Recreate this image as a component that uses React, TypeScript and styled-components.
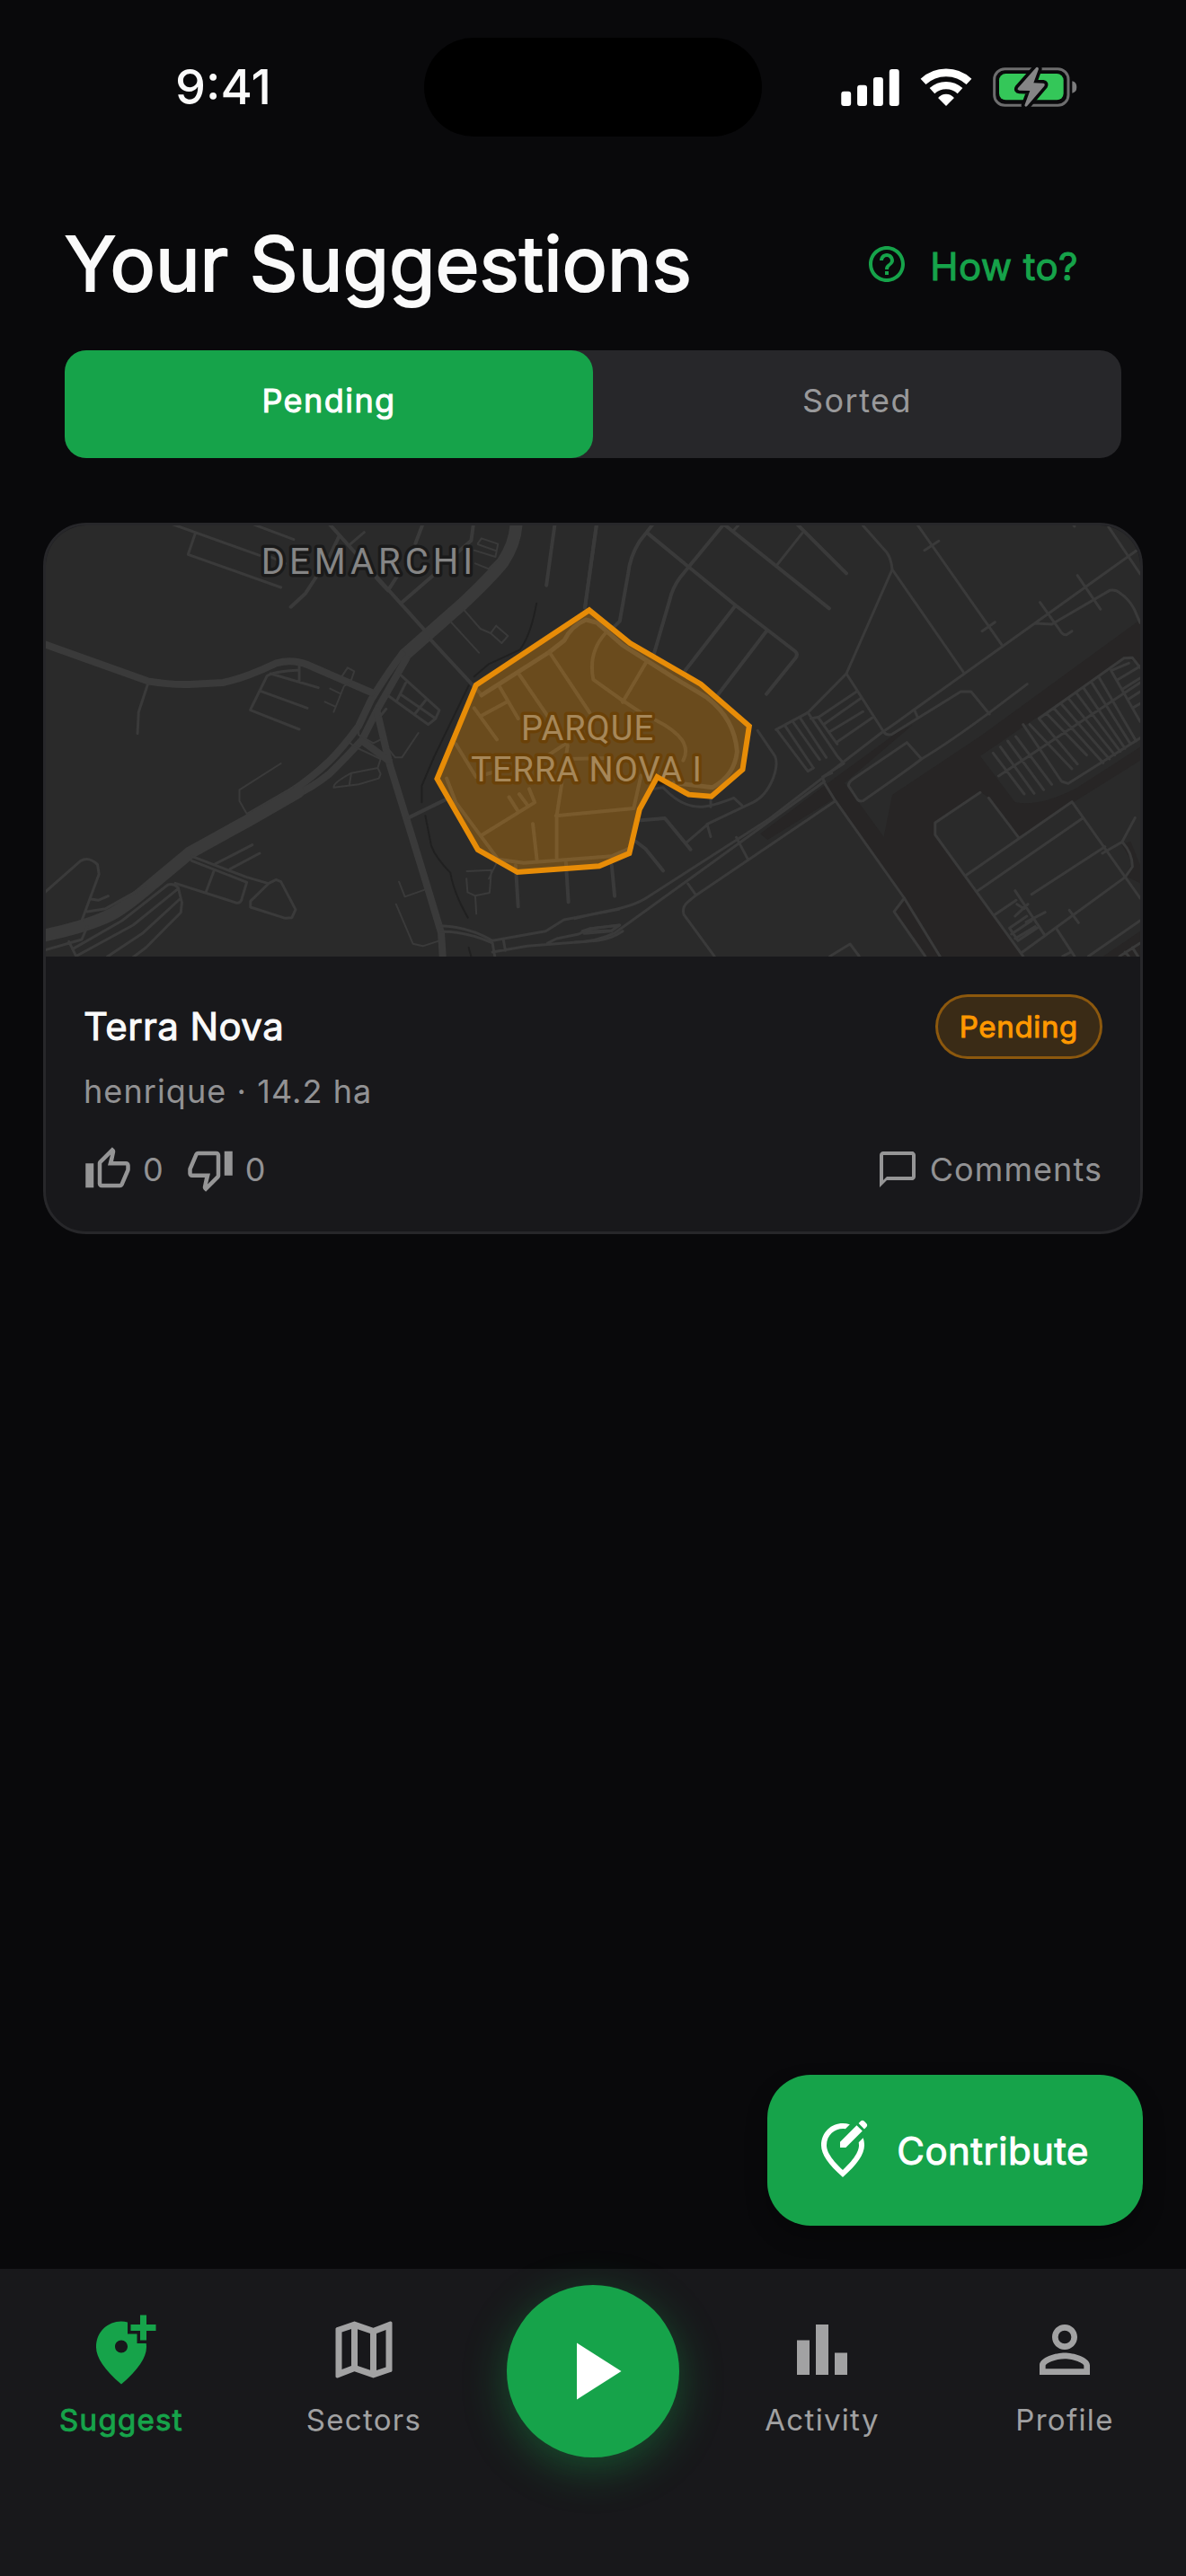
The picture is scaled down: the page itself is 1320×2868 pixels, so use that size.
import React from "react";
import styled, { createGlobalStyle, css } from "styled-components";
import {
  MdAddLocationAlt,
  MdBarChart,
  MdChatBubbleOutline,
  MdHelpOutline,
  MdOutlineEditLocationAlt,
  MdOutlineMap,
  MdOutlineThumbDown,
  MdOutlineThumbUp,
  MdPersonOutline,
  MdPlayArrow,
} from "react-icons/md";

const color = {
  page: "#09090b",
  surface: "#18181b",
  raised: "#27272a",
  green: "#16a34a",
  orange: "#ff9800",
  text: "#fafafa",
  muted: "rgba(255, 255, 255, 0.54)",
  nav: "rgba(255, 255, 255, 0.6)",
};

/* Emphasis: the regular cut thickened by a thin outline */
const emphasis = css`
  font-weight: 400;
  -webkit-text-stroke: 1px currentColor;
`;

const GlobalStyle = createGlobalStyle`
  *, *::before, *::after { box-sizing: border-box; }
  body {
    margin: 0;
    background: ${color.page};
    color: ${color.text};
    font-family: Inter, Roboto, "Liberation Sans", sans-serif;
  }
  button {
    margin: 0;
    padding: 0;
    border: 0;
    background: none;
    color: inherit;
    font: inherit;
    cursor: pointer;
  }
  svg { display: block; flex: none; }
`;

const Screen = styled.div`
  display: flex;
  flex-direction: column;
  min-height: 100vh;
`;

/* Status bar */

const StatusBar = styled.div`
  display: grid;
  grid-template-columns: 1fr auto 1fr;
  align-items: center;
  padding: 42px 0 34px;
`;

const Clock = styled.time`
  padding-left: 195px;
  font-size: 54px;
  font-weight: 500;
  line-height: 60px;
`;

const Island = styled.div`
  width: 376px;
  height: 110px;
  border-radius: 55px;
  background: #000;
`;

const StatusIcons = styled.div`
  display: flex;
  justify-content: flex-end;
  align-items: center;
  gap: 23px;
  padding-right: 121px;
`;

/* Header */

const Header = styled.header`
  display: flex;
  flex-direction: column;
  gap: 48px;
  padding: 60px 72px 0;
`;

const TitleRow = styled.div`
  display: flex;
  align-items: center;
  justify-content: space-between;
`;

const Title = styled.h1`
  margin: 0;
  font-size: 84px;
  font-weight: 400;
  line-height: 96px;
  -webkit-text-stroke: 2px currentColor;
`;

const HelpButton = styled.button`
  ${emphasis}
  display: flex;
  align-items: center;
  gap: 24px;
  padding: 0 48px;
  color: ${color.green};
  font-size: 42px;
  line-height: 60px;
  letter-spacing: 0.01em;
`;

const HelpLabel = styled.span`
  padding-top: 6px;
`;

const Tabs = styled.div`
  display: grid;
  grid-template-columns: 1fr 1fr;
  border-radius: 24px;
  background: ${color.raised};
`;

const Tab = styled.button<{ $active?: boolean }>`
  height: 120px;
  padding-bottom: 8px;
  border-radius: 24px;
  background: ${(p) => (p.$active ? color.green : "transparent")};
  color: ${(p) => (p.$active ? "#fff" : color.muted)};
  font-size: 36px;
  letter-spacing: 0.04em;
  ${(p) => p.$active && emphasis}
`;

/* Suggestion card */

const Main = styled.main`
  display: flex;
  flex: 1;
  flex-direction: column;
  padding: 72px 48px 48px;
`;

const Card = styled.article`
  overflow: hidden;
  border: 3px solid ${color.raised};
  border-radius: 48px;
  background: ${color.surface};
`;

const MapFrame = styled.div`
  height: 480px;
  background: #2a2a2a;

  > svg {
    width: 100%;
    height: 100%;
  }
`;

const CardBody = styled.div`
  display: flex;
  flex-direction: column;
  padding: 42px;
`;

const Row = styled.div`
  display: flex;
  align-items: center;
  justify-content: space-between;
`;

const CardTitle = styled.h2`
  ${emphasis}
  margin: 0;
  font-size: 42px;
  line-height: 60px;
  letter-spacing: 0.01em;
`;

const Pill = styled.span`
  ${emphasis}
  padding: 0 24px;
  border: 3px solid rgba(255, 152, 0, 0.5);
  border-radius: 36px;
  background: rgba(255, 152, 0, 0.15);
  background-clip: padding-box;
  color: ${color.orange};
  font-size: 33px;
  line-height: 66px;
  letter-spacing: 0.02em;
`;

const Meta = styled.p`
  margin: 12px 0 36px;
  color: ${color.muted};
  font-size: 36px;
  line-height: 48px;
  letter-spacing: 0.03em;
`;

const Votes = styled.div`
  display: flex;
  gap: 24px;
`;

const CardAction = styled.button`
  display: flex;
  align-items: center;
  gap: 12px;
  height: 54px;
  color: ${color.muted};
  font-size: 36px;
  line-height: 48px;
  letter-spacing: 0.03em;
`;

const FabRow = styled.div`
  display: flex;
  justify-content: flex-end;
  margin-top: auto;
`;

const Fab = styled.button`
  ${emphasis}
  display: flex;
  align-items: center;
  gap: 24px;
  height: 168px;
  padding: 0 60px 0 48px;
  border-radius: 48px;
  background: ${color.green};
  box-shadow: 0 12px 24px rgba(0, 0, 0, 0.3);
  color: #fff;
  font-size: 42px;
  letter-spacing: 0.01em;
`;

/* Bottom navigation */

const Nav = styled.nav`
  display: grid;
  grid-template-columns: 1fr 1fr 240px 1fr 1fr;
  justify-items: center;
  align-items: start;
  padding: 18px 0 132px;
  background: ${color.surface};
`;

const NavItem = styled.a<{ $active?: boolean }>`
  display: flex;
  flex-direction: column;
  align-items: center;
  gap: 12px;
  padding-top: 30px;
  color: ${(p) => (p.$active ? color.green : color.nav)};
  font-size: 33px;
  line-height: 48px;
  letter-spacing: 0.04em;
  text-decoration: none;
  ${(p) => p.$active && emphasis}
`;

const PlayButton = styled.button`
  display: flex;
  align-items: center;
  justify-content: center;
  width: 192px;
  height: 192px;
  border-radius: 50%;
  background: ${color.green};
  box-shadow: 0 12px 48px rgba(22, 163, 74, 0.4);
  color: #fff;
`;

/* Map artwork */

const Roads = styled.g`
  fill: none;
  stroke: #3a3a3a;
  stroke-linecap: round;
  stroke-linejoin: round;

  path {
    vector-effect: non-scaling-stroke;
  }
`;

const MapLabel = styled.text`
  font-family: Roboto, "Liberation Sans", sans-serif;
  text-anchor: middle;
  paint-order: stroke;
  stroke-width: 7px;
  stroke-linejoin: round;
`;

function AreaMap() {
  return (
    <svg viewBox="0 0 1218 480" preserveAspectRatio="xMidYMid slice" role="img" aria-label="Map of Terra Nova">
      <g transform="scale(0.40816 0.33333)">
        {/* railway and industrial strips */}
        <g transform="translate(1443 -45)" fill="#272525">
          <path d="M1541 360L1110 745L865 945L842 1085L735 905L920 712L880 735L690 905L505 1075L525 1095L710 955L1000 1484H1222L980 1075L982 1035L1105 935L1130 955L1208 1085L1541 830V785L1370 920Q1270 985 1200 970L1105 815L1500 485L1541 510Z" />
          <path d="M898 1290L870 1335L955 1484H995Z" />
          <path d="M1515 1100L1541 1180V1240L1500 1215L1520 1170L1490 1110Z" />
          <path d="M1541 1400L1440 1484H1541Z" />
        </g>

        {/* western half */}
        <Roads transform="translate(-27 -45)">
          <path strokeWidth="14" d="M1310 30Q1310 100 1272 170Q1235 225 1165 305L1005 478" />
          <path strokeWidth="8" d="M998 475Q960 535 915 625L880 715Q835 790 800 832Q750 890 700 930" />
          <path strokeWidth="8" d="M1010 490L935 650L890 760Q850 815 800 875Q755 920 700 950" />
          <path strokeWidth="14" d="M715 935L580 1030L420 1138L320 1240Q250 1315 205 1345Q140 1385 20 1415" />
          <path strokeWidth="8" d="M20 440L305 565Q380 580 430 575L510 570Q570 555 655 505Q700 490 740 510L915 603" />
          <path strokeWidth="8" d="M930 665L965 845Q1050 1180 1105 1405L1110 1500" />
          <path strokeWidth="8" d="M890 765L962 830" />
          <path strokeWidth="4" d="M800 40L1060 395M1075 425L1215 610M928 220L960 262L985 215M825 85L800 150L760 225L735 272L695 317M1055 40L1035 105M995 305L1085 210M1193 40L1187 95L1150 135" />
          <path strokeWidth="4" d="M1415 40L1392 245M1529 40L1497 320M1015 1022L1115 962" />
          <path strokeWidth="3" d="M370 40L610 145M435 70L415 142L668 252M590 40L703 92M855 110L895 68M640 150L680 172" />
          <path strokeWidth="2" d="M1205 105L1215 88L1260 107L1253 150L1195 128M1205 108L1256 130M1198 172L1235 190L1260 160" />
          <path strokeWidth="2" d="M1168 328L1212 390L1240 405L1255 380L1287 414L1270 438L1240 405M1132 368L1208 470" />
          <path strokeWidth="3" d="M305 575L280 668L277 740M585 660L630 548Q645 533 718 528M640 540L770 587M612 598L740 655M585 662L718 726M718 510V563" />
          <path strokeWidth="2" d="M835 548L850 520L868 532L858 568L840 582L812 668M802 590L832 608M788 634L816 650" />
          <path strokeWidth="3" d="M992 542L1100 662L1090 690L1070 710L962 615M1008 572L985 628M995 610L1090 690M1062 630L1035 672M955 658L940 680" />
          <path strokeWidth="2" d="M1043 738L998 820H980L960 790M880 715V745L920 772L940 760M850 765L870 785L940 825L932 855L940 875L935 890L880 910L812 920Q810 905 860 872L932 855M860 872L855 910" />
          <path strokeWidth="2" d="M668 840L555 928V965L575 1008L700 920" />
          <path strokeWidth="3" d="M425 1150L575 1220L632 1240M380 1240L545 1305Q560 1310 563 1285L575 1237L425 1165M485 1200L463 1272M490 1175L590 1112M530 1192L610 1140" />
          <path strokeWidth="3" d="M585 1320V1300L635 1240L655 1228L668 1235L708 1328L698 1355L680 1357ZM20 1275L122 1165Q145 1150 168 1178L172 1210L125 1365M150 1293L170 1297L197 1283M140 1335L190 1325L300 1250" />
          <path strokeWidth="3" d="M20 1465L125 1428L140 1385M90 1435L112 1490M100 1460L235 1365L360 1245Q375 1240 388 1255L398 1305L395 1338L300 1455L262 1490M112 1482L265 1380L388 1258M195 1485L290 1408L395 1290" />
          <path strokeWidth="2" d="M990 1235L1006 1285L1060 1262M982 1310L1028 1442L1055 1450L1100 1432M1175 1200L1242 1196L1237 1272L1198 1282L1177 1270L1174 1225M1198 1282L1201 1342M1255 1175L1235 1225" />
          <path strokeWidth="4" d="M1308 1180L1315 1318M1445 1165L1452 1303" />
          <path strokeWidth="3" d="M1105 1382Q1180 1385 1245 1432L1390 1400L1440 1362L1590 1327M1105 1402Q1175 1400 1245 1440L1252 1490M1275 1430L1280 1465M1245 1470L1340 1450L1530 1432Q1570 1425 1600 1400M1395 1440L1420 1425L1480 1410L1510 1392L1590 1380L1570 1400L1495 1408" />
          <path strokeWidth="2" stroke="#202020" d="M1365 305Q1350 410 1320 460L1235 508L1195 550M1180 580L1085 820L1052 915V970M1062 1015L1078 1115Q1090 1155 1130 1205Q1140 1275 1178 1355M1180 1455L1188 1490" />
        </Roads>

        {/* streets inside the neighbourhood */}
        <Roads transform="translate(-27 -45)">
          <path strokeWidth="5" stroke="#424242" d="M1215 612L1400 468L1440 430Q1460 380 1500 360L1530 370L1600 445L1735 550L1830 620Q1905 690 1912 800Q1905 880 1845 920L1740 905" />
          <path strokeWidth="4" stroke="#404040" d="M1318 543L1400 690M1400 468L1510 670M1195 655L1257 760M1215 680L1283 635M1265 585L1315 690M1120 890L1145 970L1260 1160L1330 1172L1570 1150L1625 1120M1418 1015L1630 990M1450 780L1420 1015V1155M1145 775L1200 885L1245 870M1215 1080L1360 970L1345 925M1318 942L1342 982M1290 952L1315 1000M1355 1042L1366 1160M1400 810L1450 770M1450 825L1560 822M1553 405Q1505 470 1520 560L1600 630L1650 670M1665 500L1600 635M1690 695Q1795 760 1765 830M1650 880L1630 990" />
        </Roads>

        {/* eastern half */}
        <Roads transform="translate(1443 -45)">
          <path strokeWidth="4" d="M59 40L27 320M213 40L175 100Q150 150 145 205L122 365L105 385M195 68L438 312L600 465Q610 475 600 490L522 608M403 45L287 218Q265 255 258 295L215 475M410 45L693 322M605 40L740 205M438 312L300 530M522 398L390 610" />
          <path strokeWidth="3" d="M620 70L550 178M445 45L430 65M785 45L850 135Q862 155 865 192L740 540L635 670L548 727M865 192L1062 540M935 45L1165 446M953 128L992 97M1110 398L1145 368M1455 50L1541 207M1360 45L1362 48" />
          <path strokeWidth="3" d="M1530 130L925 660Q870 710 835 738L530 1025L200 1285Q160 1320 60 1340L0 1358M1370 212L1433 325M1268 302L1322 395Q1330 412 1340 410L1355 398M1255 372L1300 375L1458 262Q1475 258 1485 270Q1510 290 1525 325L1541 370" />
          <path strokeWidth="3" d="M740 540L842 735Q850 748 865 742L1052 600L1080 600L1130 675M925 660L935 688M1233 575L1130 670Q1020 770 945 825Q920 850 785 965Q775 968 770 960L746 915Q745 905 755 895L905 770L945 825" />
          <path strokeWidth="3" d="M635 670L715 815L733 840L675 885L680 905L710 965L898 1290L995 1484M680 900L110 1405Q60 1435 0 1437M710 965L330 1280L310 1300Q290 1320 297 1345L380 1484M440 1087L470 1157M308 1242L330 1280M650 855L635 866L550 727M675 885L700 872" />
          <path strokeWidth="3" d="M572 713L650 855M595 702L667 827M615 690L685 820M643 690L665 685L768 600M665 690L715 775M680 708L780 622M693 735L785 667M715 768L810 688M20 1400L40 1392L122 1380L100 1398L20 1402" />
          <path strokeWidth="3" d="M498 730L545 815Q555 840 540 890Q520 950 485 970L365 1040L305 1103M215 925L240 920Q290 985 340 985Q370 985 433 955L455 980M370 955V985M360 1042L370 1085" />
          <path strokeWidth="4" d="M180 1030L245 1023L315 1127M165 1100L192 1125L240 1198M100 1180L108 1283" />
          <path strokeWidth="3" d="M898 1290L870 1335L955 1484M695 1484L750 1443L775 1484M1105 937L982 1038V1078L1222 1484M1128 955L1208 1085M1068 1212L1355 968L1541 1290M1098 1265L1385 1022M1245 1277L1445 1118M1438 1140L1492 1102L1527 1022M1492 1102Q1520 1140 1520 1185L1500 1220L1220 1470M1145 1345L1203 1297" />
          <path strokeWidth="3" d="M1200 1265L1280 1412M1185 1390L1232 1350M1190 1410L1245 1365M1200 1425L1255 1385M1185 1390L1208 1432L1260 1390M1200 1350L1235 1310M1230 1370L1282 1337M1205 1310L1225 1325M1348 1330L1373 1372M1312 1390L1362 1484M1541 1365L1400 1484M1330 1484L1352 1470M1485 1484L1541 1440M1500 1470L1510 1484M1520 1455L1535 1484" />
          {/* parking rows */}
          <path strokeWidth="3" d="M1155 882L1541 570M1265 690L1497 488L1520 487L1541 520M1265 690L1370 842M1345 907L1541 755M1345 907L1327 900L1222 710M1140 805L1225 942M1160 785L1252 940M1180 765L1278 928M1202 750L1300 910M1240 710L1355 858M1285 672L1395 812M1305 655L1440 838M1325 640L1457 825M1345 622L1472 812M1367 605L1487 800M1388 590L1500 790M1410 572L1515 775M1430 555L1530 765M1462 530L1541 700M1462 530L1510 505M1480 560L1541 515M1495 590L1541 555M1510 625L1541 600M1520 655L1541 640" />
        </Roads>
      </g>

      <MapLabel x="360" y="54" fontSize="40" letterSpacing="5" fill="#858585" stroke="#1a1a1a">DEMARCHI</MapLabel>
      <MapLabel x="603" y="239" fontSize="38" letterSpacing="1" fill="#808080" stroke="#2a1c0c">PARQUE</MapLabel>
      <MapLabel x="602" y="285" fontSize="38" letterSpacing="1" fill="#808080" stroke="#2a1c0c">TERRA NOVA I</MapLabel>

      <g transform="scale(0.40816 0.33333) translate(-27 -45)">
        <path
          d="M1509 328L1620 438L1813 575L1945 715L1927 860L1842 950L1780 944L1694 885L1646 993L1618 1140L1536 1183L1313 1203L1205 1128L1094 891L1200 578Z"
          fill="rgba(255,152,0,0.3)"
          stroke="#e78c07"
          strokeWidth="6"
          vectorEffect="non-scaling-stroke"
        />
      </g>
    </svg>
  );
}

function SignalIcon() {
  return (
    <svg width="65" height="41" viewBox="111 108 195 124" fill="#fff" aria-hidden="true">
      <rect x="111" y="183" width="33" height="49" rx="9" />
      <rect x="165" y="162" width="33" height="70" rx="9" />
      <rect x="219" y="135" width="33" height="97" rx="9" />
      <rect x="273" y="108" width="33" height="124" rx="9" />
    </svg>
  );
}

function WifiIcon() {
  return (
    <svg width="58" height="42" viewBox="373 105 174 127" fill="none" stroke="#fff" aria-hidden="true">
      <path strokeWidth="26" d="M383 150A113 113 0 0 1 537 150" />
      <path strokeWidth="25" d="M413 181A69 69 0 0 1 507 181" />
      <path fill="#fff" stroke="none" d="M460 232L433 205Q444 192 460 192T487 205Z" />
    </svg>
  );
}

function BatteryIcon() {
  const bolt = "M759 104L698 173Q694 180 703 181L738 182L720 231Q722 238 728 234L786 166Q790 158 782 157L750 156L767 109Q766 102 759 104Z";
  return (
    <svg width="94" height="46" viewBox="614 101 282 138" aria-hidden="true">
      <rect x="619" y="109" width="247" height="122" rx="35" fill="none" stroke="#6d6d6e" strokeWidth="9" />
      <rect x="635" y="125" width="215" height="88" rx="22" fill="#34c759" />
      <path d="M879 150Q894 153 894 170T879 190Z" fill="#7c7c7d" />
      <path d={bolt} fill={color.page} stroke={color.page} strokeWidth="22" strokeLinejoin="round" />
      <path d={bolt} fill="#858586" />
    </svg>
  );
}

export default function App() {
  return (
    <Screen>
      <GlobalStyle />
      <StatusBar>
        <Clock>9:41</Clock>
        <Island />
        <StatusIcons>
          <SignalIcon />
          <WifiIcon />
          <BatteryIcon />
        </StatusIcons>
      </StatusBar>

      <Header>
        <TitleRow>
          <Title>Your Suggestions</Title>
          <HelpButton type="button">
            <MdHelpOutline size={48} />
            <HelpLabel>How to?</HelpLabel>
          </HelpButton>
        </TitleRow>
        <Tabs role="tablist">
          <Tab type="button" role="tab" aria-selected="true" $active>Pending</Tab>
          <Tab type="button" role="tab" aria-selected="false">Sorted</Tab>
        </Tabs>
      </Header>

      <Main>
        <Card>
          <MapFrame>
            <AreaMap />
          </MapFrame>
          <CardBody>
            <Row>
              <CardTitle>Terra Nova</CardTitle>
              <Pill>Pending</Pill>
            </Row>
            <Meta>henrique · 14.2 ha</Meta>
            <Row>
              <Votes>
                <CardAction type="button" aria-label="Upvote, 0">
                  <MdOutlineThumbUp size={54} />0
                </CardAction>
                <CardAction type="button" aria-label="Downvote, 0">
                  <MdOutlineThumbDown size={54} />0
                </CardAction>
              </Votes>
              <CardAction type="button">
                <MdChatBubbleOutline size={48} />
                Comments
              </CardAction>
            </Row>
          </CardBody>
        </Card>
        <FabRow>
          <Fab type="button">
            <MdOutlineEditLocationAlt size={72} />
            Contribute
          </Fab>
        </FabRow>
      </Main>

      <Nav>
        <NavItem href="#suggest" aria-current="page" $active>
          <MdAddLocationAlt size={84} />
          Suggest
        </NavItem>
        <NavItem href="#sectors">
          <MdOutlineMap size={84} />
          Sectors
        </NavItem>
        <PlayButton type="button" aria-label="Start">
          <MdPlayArrow size={108} />
        </PlayButton>
        <NavItem href="#activity">
          <MdBarChart size={84} />
          Activity
        </NavItem>
        <NavItem href="#profile">
          <MdPersonOutline size={84} />
          Profile
        </NavItem>
      </Nav>
    </Screen>
  );
}
